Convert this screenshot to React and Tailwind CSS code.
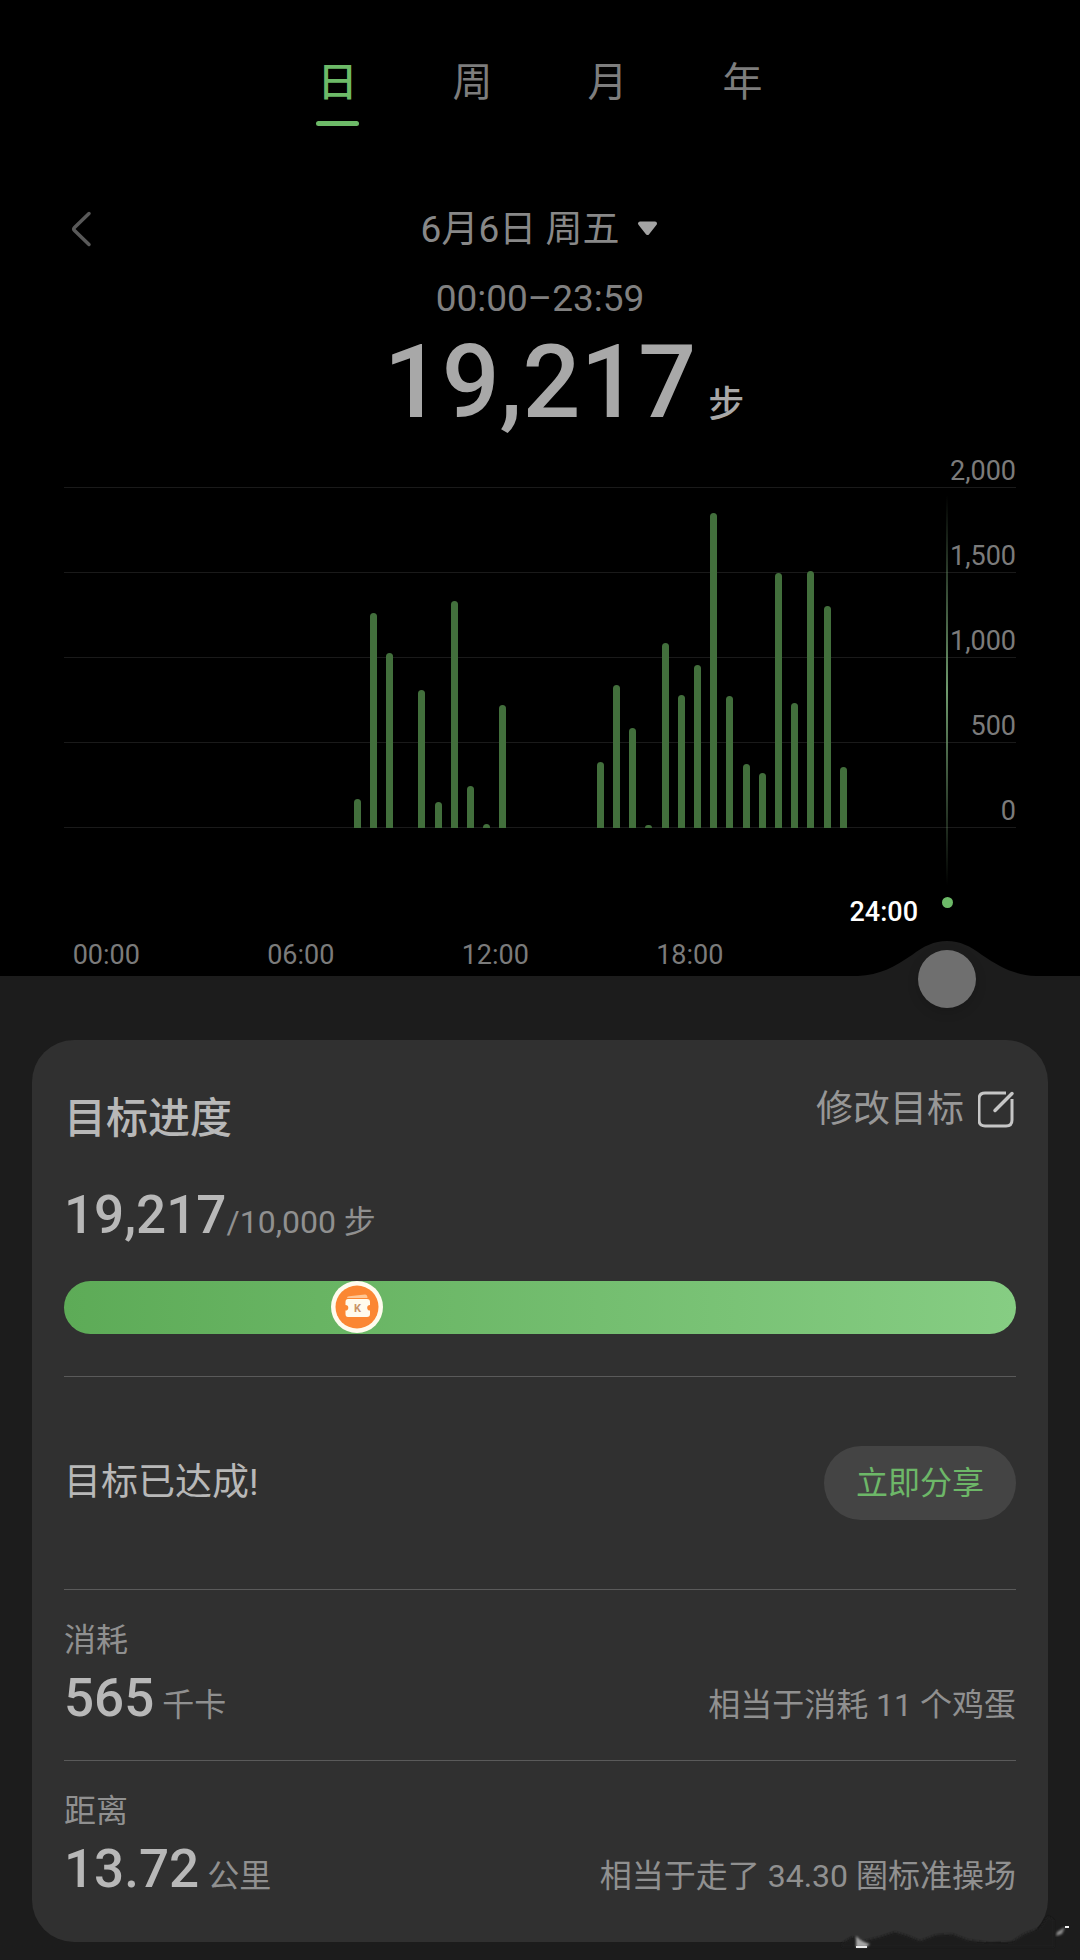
import { useState } from "react";

const TABS = ["日", "周", "月", "年"];
const Y_TICKS = ["1,500", "1,000", "500", "0"];
const X_TICKS = ["00:00", "06:00", "12:00", "18:00"];
const MAX_STEPS = 2000;

// steps per half hour, keyed by slot (0 = 00:00, 47 = 23:30)
const STEPS = {
    15: 172,
    16: 1262,
    17: 1030,
    19: 811,
    20: 154,
    21: 1335,
    22: 250,
    23: 24,
    24: 722,
    30: 391,
    31: 843,
    32: 588,
    33: 18,
    34: 1091,
    35: 782,
    36: 960,
    37: 1852,
    38: 775,
    39: 375,
    40: 323,
    41: 1503,
    42: 735,
    43: 1510,
    44: 1305,
    45: 359,
};

const SLOTS = Array.from({ length: 48 }, (_, i) => STEPS[i] ?? 0);

function Tabs({ active, onChange }) {
    return (
        <nav className="flex justify-center pt-[55px]">
            {TABS.map((tab) => (
                <button
                    key={tab}
                    type="button"
                    onClick={() => onChange(tab)}
                    className={`flex w-[135px] flex-col items-center gap-[10px] text-[40px] leading-[56px] ${
                        tab === active ? "font-medium text-[#6dba68]" : "text-[#7d7d7d]"
                    }`}
                >
                    {tab}
                    <span
                        className={`h-[5px] w-[43px] rounded-full ${
                            tab === active ? "bg-[#6dba68]" : "bg-transparent"
                        }`}
                    />
                </button>
            ))}
        </nav>
    );
}

function DateHeader() {
    return (
        <header>
            <div className="mt-[76px] grid h-14 grid-cols-[1fr_auto_1fr] items-center px-[64px]">
                <button type="button" aria-label="前一天" className="w-8">
                    <svg viewBox="0 0 32 40" className="h-10 w-8" fill="none">
                        <path
                            d="M25 3.500 L10.500 17.500 Q9 19 10.500 20.500 L25 34.500"
                            stroke="#595959"
                            strokeWidth="3.500"
                            strokeLinecap="round"
                        />
                    </svg>
                </button>
                <button
                    type="button"
                    className="flex items-center gap-[18px] text-[37px] leading-[56px] text-[#888888]"
                >
                    6月6日 周五
                    <svg viewBox="0 0 22 18" className="h-[18px] w-[22px]" aria-hidden="true">
                        <path
                            d="M3 2.500 H18 L10.500 12 Z"
                            fill="#a3a3a3"
                            stroke="#a3a3a3"
                            strokeWidth="4"
                            strokeLinejoin="round"
                        />
                    </svg>
                </button>
            </div>
            <p className="mt-[17px] text-center text-[37px] leading-[48px] text-[#808080]">
                00:00–23:59
            </p>
            <p className="mt-[7px] grid grid-cols-[1fr_auto_1fr] items-baseline gap-3 text-[#a8a8a8]">
                <span className="col-start-2 text-[102px] leading-[104px] font-medium">19,217</span>
                <span className="text-[36px] leading-9 font-medium">步</span>
            </p>
        </header>
    );
}

function StepsChart() {
    return (
        <section className="relative text-[27px] text-[#7b7b7b]">
            <div className="relative mx-[64px] mt-[19px]">
                <div className="flex h-[35px] items-end justify-end border-b border-[#1a1a1a] leading-8">
                    2,000
                </div>
                {Y_TICKS.map((tick) => (
                    <div
                        key={tick}
                        className="flex h-[85px] items-end justify-end border-b border-[#1a1a1a] leading-8"
                    >
                        {tick}
                    </div>
                ))}
                <div className="absolute right-[132px] bottom-0 left-[42px] flex h-[340px] items-end">
                    {SLOTS.map((steps, i) => (
                        <div key={i} className="flex h-full flex-1 items-end justify-center">
                            <div
                                className="w-[7px] rounded-t-full bg-[#426f3c]"
                                style={{ height: `${(steps / MAX_STEPS) * 100}%` }}
                            />
                        </div>
                    ))}
                </div>
            </div>

            {/* cursor line of the selected time */}
            <div className="absolute right-[132px] bottom-[91px] h-[390px] w-[2px] bg-linear-to-b from-transparent via-[#6f9a6d] to-transparent" />
            <div className="absolute right-[127px] bottom-[68px] size-[11px] rounded-full bg-[#6dba68]" />

            <p className="mt-[68px] pr-[162px] text-right leading-8 font-medium text-white">24:00</p>
            <div className="mt-[11px] mr-[293px] ml-[9px] grid grid-cols-4 pb-[5px] text-center leading-8">
                {X_TICKS.map((tick) => (
                    <span key={tick}>{tick}</span>
                ))}
            </div>
        </section>
    );
}

function TimeSlider() {
    return (
        <>
            <svg
                viewBox="0 0 178 36"
                className="absolute right-[44px] bottom-full h-[36px] w-[178px]"
                aria-hidden="true"
            >
                <path
                    d="M0 36 C22 35 36 27 54 15 C66 6 76 1 89 1 C102 1 112 6 124 15 C142 27 156 35 178 36 Z"
                    fill="#1c1c1c"
                />
            </svg>
            <input
                type="range"
                aria-label="时间"
                min="0"
                max="48"
                defaultValue="48"
                className="absolute -top-[26px] right-[104px] left-[77px] h-[58px] appearance-none bg-transparent [&::-webkit-slider-thumb]:size-[58px] [&::-webkit-slider-thumb]:appearance-none [&::-webkit-slider-thumb]:rounded-full [&::-webkit-slider-thumb]:bg-[#6f6f6f] [&::-webkit-slider-thumb]:shadow-[0_4px_12px_rgba(0,0,0,0.15)]"
            />
        </>
    );
}

function EditIcon() {
    return (
        <svg viewBox="3 1 38 38" className="size-[38px]" fill="none" aria-hidden="true">
            <path
                d="M30 3 H9 Q3 3 3 9 V30 Q3 36 9 36 H30 Q36 36 36 30 V9"
                transform="translate(1 0)"
                stroke="#c6c6c6"
                strokeWidth="3"
            />
            <path d="M20 20.500 L37 3.500" stroke="#c6c6c6" strokeWidth="3.500" strokeLinecap="round" />
        </svg>
    );
}

function CouponBadge() {
    return (
        <svg viewBox="0 0 52 52" className="size-[52px]" aria-hidden="true">
            <circle cx="26" cy="26" r="26" fill="#fffbee" />
            <circle cx="26" cy="26" r="21.500" fill="#fb8733" />
            <path d="M16 17 Q16 15.500 18 15.300 L34 13.500 Q36.500 13.500 36.500 17 Z" fill="#ffc795" />
            <path
                d="M17 18 H36 Q39 18 39 21 V24 A2.800 2.800 0 0 0 39 29.600 V33 Q39 36 36 36 H17 Q14.500 36 14.500 33 V29.600 A2.800 2.800 0 0 0 14.500 24 V21 Q14.500 18 17 18 Z"
                fill="#fffbee"
            />
            <text
                x="26.500"
                y="31"
                textAnchor="middle"
                fontSize="11"
                fontWeight="700"
                fill="#c99468"
            >
                K
            </text>
        </svg>
    );
}

function Stat({ label, value, unit, note }) {
    return (
        <div className="py-[30px] text-[32px] text-[#909090]">
            <p className="leading-10">{label}</p>
            <div className="mt-[6px] flex items-baseline justify-between leading-none">
                <p>
                    <span className="text-[53px] leading-[64px] font-medium text-[#b8b8b8]">
                        {value}
                    </span>{" "}
                    {unit}
                </p>
                <p>{note}</p>
            </div>
        </div>
    );
}

function GoalCard() {
    return (
        <section className="mx-8 rounded-[42px] bg-[#303030] px-8 pt-[51px] pb-[11px]">
            <div className="flex items-start justify-between">
                <h2 className="text-[42px] leading-[56px] font-medium text-[#b8b8b8]">目标进度</h2>
                <button
                    type="button"
                    className="flex items-center gap-[14px] text-[37px] leading-[38px] text-[#979797]"
                >
                    修改目标
                    <EditIcon />
                </button>
            </div>

            <p className="mt-9 text-[32px] leading-none text-[#909090]">
                <span className="text-[53px] leading-[64px] font-medium text-[#b8b8b8]">19,217</span>
                /10,000 步
            </p>
            <div className="relative mt-[34px] h-[53px] rounded-full bg-linear-to-r from-[#5dab57] to-[#86cd83]">
                <div className="absolute inset-y-0 left-[28%]">
                    <CouponBadge />
                </div>
            </div>

            <div className="mt-[42px] divide-y divide-[#5a5a5a] border-t border-[#5a5a5a]">
                <div className="flex items-center justify-between py-[69px]">
                    <p className="text-[37px] leading-[56px] text-[#b8b8b8]">目标已达成!</p>
                    <button
                        type="button"
                        className="h-[74px] rounded-full bg-[#444444] px-8 text-[32px] text-[#6db768]"
                    >
                        立即分享
                    </button>
                </div>
                <Stat label="消耗" value="565" unit="千卡" note="相当于消耗 11 个鸡蛋" />
                <Stat label="距离" value="13.72" unit="公里" note="相当于走了 34.30 圈标准操场" />
            </div>
        </section>
    );
}

// dark smudge with two bright flecks over the bottom corner of the card
function CornerSmudge() {
    return (
        <svg
            viewBox="0 0 240 40"
            className="pointer-events-none absolute right-0 bottom-[10px] h-10 w-[240px]"
            aria-hidden="true"
        >
            <defs>
                <filter id="soft">
                    <feGaussianBlur stdDeviation="1.200" />
                </filter>
            </defs>
            <path
                d="M2 33 L12 27 L24 31 L40 27 L55 22 L68 26 L80 31 L96 25 L112 24 L128 30 L150 33 L172 32 L184 24 L200 18 L208 6 L214 10 V37 H2 Z"
                fill="#1d1d1d"
                filter="url(#soft)"
            />
            <path d="M16 26 Q22 32 30 34 L26 37 H16 Z" fill="#a5a5a5" filter="url(#soft)" />
            <path d="M16 36 H27 V38 H16 Z" fill="#e8e8e8" />
            <path d="M217 22 L225 17 L222 24 L216 26 Z" fill="#8c8c8c" filter="url(#soft)" />
            <path d="M225 16 H229 V18 H225 Z" fill="#f0f0f0" />
        </svg>
    );
}

export default function App() {
    const [tab, setTab] = useState("日");

    return (
        <main className="min-h-screen bg-[#1c1c1c] font-[Roboto,'Noto_Sans_CJK_SC',sans-serif]">
            <div className="bg-black">
                <Tabs active={tab} onChange={setTab} />
                <DateHeader />
                <StepsChart />
            </div>
            <div className="relative pt-16 pb-[18px]">
                <TimeSlider />
                <GoalCard />
                <CornerSmudge />
            </div>
        </main>
    );
}
